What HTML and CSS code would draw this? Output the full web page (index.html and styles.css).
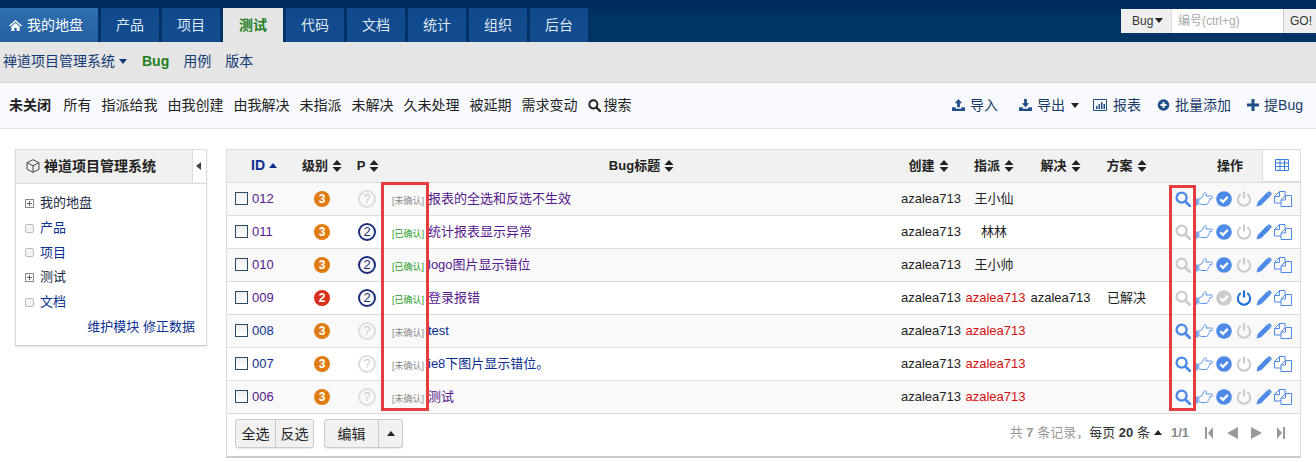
FILE: index.html
```html
<!DOCTYPE html>
<html lang="zh-CN">
<head>
  <meta charset="UTF-8">
  <title>禅道项目管理系统 - Bug</title>
  <link rel="stylesheet" href="styles.css">
</head>
<body>
  <svg class="sprite" xmlns="http://www.w3.org/2000/svg">
    <symbol id="i-search" viewBox="0 0 16 16"><circle cx="6.6" cy="6.6" r="5" fill="none" stroke="currentColor" stroke-width="2.4"/><path d="M10.4 10.4L15 15" stroke="currentColor" stroke-width="2.8" stroke-linecap="round"/></symbol>
    <symbol id="i-hand" viewBox="0 0 18 16"><path d="M0 7.5h3v7H0z" fill="currentColor" opacity=".75"/><path d="M3.800 8l3-1.200 2.400-4.400c.5-1.200 2.400-.9 2.200.8l-.5 1.800h5.300c1.700 0 1.700 2.600 0 2.600h-1.600c.6 1.200-.1 2-.8 2.300.2 1-.3 1.700-1 2 .1 1-.6 1.600-1.500 1.600H7c-1.300 0-2.200-.6-3.200-.8z" fill="#fff" stroke="currentColor" stroke-width=".9"/></symbol>
    <symbol id="i-check" viewBox="0 0 16 16"><circle cx="8" cy="8" r="7.800" fill="currentColor"/><path d="M4.300 8.200l2.700 2.700 4.800-5" fill="none" stroke="#fff" stroke-width="2.300"/></symbol>
    <symbol id="i-power" viewBox="0 0 16 16"><path d="M4.700 3.200a6.200 6.200 0 1 0 6.600 0" fill="none" stroke="currentColor" stroke-width="2"/><path d="M8 .5v7" stroke="currentColor" stroke-width="2.200"/></symbol>
    <symbol id="i-pencil" viewBox="0 0 16 16"><path d="M.5 15.500l1.200-4.600L11 1.600l3.400 3.400-9.300 9.300z" fill="currentColor"/><path d="M11.900.9c.8-.8 1.700-.8 2.400 0l.8.800c.7.700.7 1.600 0 2.400l-.7.700-3.200-3.200z" fill="currentColor"/></symbol>
    <symbol id="i-copy" viewBox="0 0 18 16"><path d="M5.500.5H11V4.500M5.500.5L.5 5.500V12H7M5.500.5V5.500H.5" fill="none" stroke="currentColor"/><path d="M11.500 4.500H17.500V15.500H7V9z" fill="#fff" stroke="currentColor"/><path d="M11.500 4.500V9H7" fill="none" stroke="currentColor"/></symbol>
    <symbol id="i-sort" viewBox="0 0 10 12"><path d="M5 0l4.500 5H.5zM5 12L.5 7h9z" fill="currentColor"/></symbol>
    <symbol id="i-home" viewBox="0 0 14 12"><path d="M7 0l7 6-1 1-6-5-6 5-1-1zM2.500 7L7 3.200 11.500 7v5H8.300V8.500H5.700V12H2.500z" fill="currentColor"/></symbol>
    <symbol id="i-upload" viewBox="0 0 14 13"><path d="M7 0l4 4.500H8.500V9h-3V4.500H3zM0 9h4v1.500h6V9h4v4H0z" fill="currentColor"/></symbol>
    <symbol id="i-download" viewBox="0 0 14 13"><path d="M5.500 0h3v4.500H11L7 9 3 4.500h2.500zM0 9h4v1.500h6V9h4v4H0z" fill="currentColor"/></symbol>
    <symbol id="i-report" viewBox="0 0 14 12"><path d="M.5.500h13v11H.5z" fill="none" stroke="currentColor"/><path d="M3 7h1.500v3H3zM5.500 5H7v5H5.500zM8 3h1.500v7H8zM10.500 5H12v5h-1.500z" fill="currentColor"/></symbol>
    <symbol id="i-plus-circle" viewBox="0 0 14 14"><circle cx="7" cy="7" r="6.800" fill="currentColor"/><path d="M3.500 7h7M7 3.500v7" stroke="#fff" stroke-width="2.200"/></symbol>
    <symbol id="i-plus" viewBox="0 0 12 12"><path d="M0 4.500h4.500V0h3v4.500H12v3H7.500V12h-3V7.500H0z" fill="currentColor"/></symbol>
    <symbol id="i-cube" viewBox="0 0 14 14"><path d="M7 .7l6 3v6.600l-6 3-6-3V3.700zM1 3.700l6 3 6-3M7 6.700v6.600" fill="none" stroke="currentColor"/></symbol>
    <symbol id="i-grid" viewBox="0 0 14 12"><path d="M.5.500h13v11H.5zM.5 4h13M.5 7.500h13M5 .5v11M9.500.5v11" fill="none" stroke="currentColor"/></symbol>
    <symbol id="i-first" viewBox="0 0 8 12"><path d="M0 0h2v12H0zM8 0v12L3 6z" fill="currentColor"/></symbol>
    <symbol id="i-prev" viewBox="0 0 11 12"><path d="M11 0v12L0 6z" fill="currentColor"/></symbol>
    <symbol id="i-next" viewBox="0 0 11 12"><path d="M0 0v12l11-6z" fill="currentColor"/></symbol>
    <symbol id="i-last" viewBox="0 0 8 12"><path d="M6 0h2v12H6zM0 0v12l5-6z" fill="currentColor"/></symbol>
  </svg>

  <header class="mainnav">
    <ul class="tabs">
      <li class="tab home"><svg class="ico-home"><use href="#i-home"/></svg>我的地盘</li>
      <li class="tab">产品</li>
      <li class="tab">项目</li>
      <li class="tab active">测试</li>
      <li class="tab">代码</li>
      <li class="tab">文档</li>
      <li class="tab">统计</li>
      <li class="tab">组织</li>
      <li class="tab">后台</li>
    </ul>
    <div class="searchbox">
      <span class="search-type">Bug<i class="caret"></i></span>
      <span class="search-input">编号(ctrl+g)</span>
      <span class="search-go">GO!</span>
    </div>
  </header>

  <nav class="subnav">
    <span class="sub-item project">禅道项目管理系统<i class="caret"></i></span>
    <span class="sub-item current">Bug</span>
    <span class="sub-item">用例</span>
    <span class="sub-item">版本</span>
  </nav>

  <div class="featurebar">
    <div class="filters">
      <a class="active">未关闭</a>
      <a>所有</a>
      <a>指派给我</a>
      <a>由我创建</a>
      <a>由我解决</a>
      <a>未指派</a>
      <a>未解决</a>
      <a>久未处理</a>
      <a>被延期</a>
      <a>需求变动</a>
      <a class="search-link"><svg class="ico-13"><use href="#i-search"/></svg>搜索</a>
    </div>
    <div class="feature-actions">
      <a><svg class="ico-fa"><use href="#i-upload"/></svg>导入</a>
      <a><svg class="ico-fa"><use href="#i-download"/></svg>导出<i class="caret"></i></a>
      <a class="act-report"><svg class="ico-fa"><use href="#i-report"/></svg>报表</a>
      <a><svg class="ico-fa"><use href="#i-plus-circle"/></svg>批量添加</a>
      <a class="act-add"><svg class="ico-fa"><use href="#i-plus"/></svg>提Bug</a>
    </div>
  </div>

  <main class="content">
    <aside class="side">
      <div class="side-head">
        <svg class="ico-cube"><use href="#i-cube"/></svg><strong>禅道项目管理系统</strong>
        <span class="side-toggle"><i class="caret-left"></i></span>
      </div>
      <ul class="tree">
        <li><i class="node plus"></i><span class="dark">我的地盘</span></li>
        <li><i class="node"></i>产品</li>
        <li><i class="node"></i>项目</li>
        <li><i class="node plus"></i><span class="dark">测试</span></li>
        <li><i class="node"></i>文档</li>
      </ul>
      <div class="side-links"><a>维护模块</a> <a>修正数据</a></div>
    </aside>

    <section class="panel">
      <table class="bugs">
        <colgroup>
          <col class="c-id"><col class="c-level"><col class="c-pri"><col class="c-title"><col class="c-user"><col class="c-assign"><col class="c-res"><col class="c-sol"><col class="c-ops">
        </colgroup>
        <thead>
          <tr>
            <th class="th-id">ID<i class="caret-up"></i></th>
            <th>级别<svg class="sort"><use href="#i-sort"/></svg></th>
            <th class="th-pri">P<svg class="sort"><use href="#i-sort"/></svg></th>
            <th class="th-title">Bug标题<svg class="sort"><use href="#i-sort"/></svg></th>
            <th class="th-user">创建<svg class="sort"><use href="#i-sort"/></svg></th>
            <th>指派<svg class="sort"><use href="#i-sort"/></svg></th>
            <th>解决<svg class="sort"><use href="#i-sort"/></svg></th>
            <th>方案<svg class="sort"><use href="#i-sort"/></svg></th>
            <th class="th-ops">操作</th>
          </tr>
        </thead>
        <tbody>
          <tr>
            <td class="td-id"><i class="check"></i><a class="seen">012</a></td>
            <td class="center"><span class="sev s3">3</span></td>
            <td class="center"><span class="pri none">?</span></td>
            <td><span class="tag">[未确认]</span><a class="seen">报表的全选和反选不生效</a></td>
            <td class="td-user">azalea713</td>
            <td class="center">王小仙</td>
            <td class="center"></td>
            <td class="center"></td>
            <td class="ops">
              <svg class="op on"><use href="#i-search"/></svg><svg class="op hand on"><use href="#i-hand"/></svg><svg class="op on"><use href="#i-check"/></svg><svg class="op off"><use href="#i-power"/></svg><svg class="op on"><use href="#i-pencil"/></svg><svg class="op copy on"><use href="#i-copy"/></svg>
            </td>
          </tr>
          <tr>
            <td class="td-id"><i class="check"></i><a class="seen">011</a></td>
            <td class="center"><span class="sev s3">3</span></td>
            <td class="center"><span class="pri p2">2</span></td>
            <td><span class="tag ok">[已确认]</span><a class="seen">统计报表显示异常</a></td>
            <td class="td-user">azalea713</td>
            <td class="center">林林</td>
            <td class="center"></td>
            <td class="center"></td>
            <td class="ops">
              <svg class="op off"><use href="#i-search"/></svg><svg class="op hand on"><use href="#i-hand"/></svg><svg class="op on"><use href="#i-check"/></svg><svg class="op off"><use href="#i-power"/></svg><svg class="op on"><use href="#i-pencil"/></svg><svg class="op copy on"><use href="#i-copy"/></svg>
            </td>
          </tr>
          <tr>
            <td class="td-id"><i class="check"></i><a class="seen">010</a></td>
            <td class="center"><span class="sev s3">3</span></td>
            <td class="center"><span class="pri p2">2</span></td>
            <td><span class="tag ok">[已确认]</span><a class="seen">logo图片显示错位</a></td>
            <td class="td-user">azalea713</td>
            <td class="center">王小帅</td>
            <td class="center"></td>
            <td class="center"></td>
            <td class="ops">
              <svg class="op off"><use href="#i-search"/></svg><svg class="op hand on"><use href="#i-hand"/></svg><svg class="op on"><use href="#i-check"/></svg><svg class="op off"><use href="#i-power"/></svg><svg class="op on"><use href="#i-pencil"/></svg><svg class="op copy on"><use href="#i-copy"/></svg>
            </td>
          </tr>
          <tr>
            <td class="td-id"><i class="check"></i><a class="seen">009</a></td>
            <td class="center"><span class="sev s2">2</span></td>
            <td class="center"><span class="pri p2">2</span></td>
            <td><span class="tag ok">[已确认]</span><a class="seen">登录报错</a></td>
            <td class="td-user">azalea713</td>
            <td class="center red">azalea713</td>
            <td class="center">azalea713</td>
            <td class="center">已解决</td>
            <td class="ops">
              <svg class="op off"><use href="#i-search"/></svg><svg class="op hand on"><use href="#i-hand"/></svg><svg class="op off"><use href="#i-check"/></svg><svg class="op on-dark"><use href="#i-power"/></svg><svg class="op on"><use href="#i-pencil"/></svg><svg class="op copy on"><use href="#i-copy"/></svg>
            </td>
          </tr>
          <tr>
            <td class="td-id"><i class="check"></i><a>008</a></td>
            <td class="center"><span class="sev s3">3</span></td>
            <td class="center"><span class="pri none">?</span></td>
            <td><span class="tag">[未确认]</span><a>test</a></td>
            <td class="td-user">azalea713</td>
            <td class="center red">azalea713</td>
            <td class="center"></td>
            <td class="center"></td>
            <td class="ops">
              <svg class="op on"><use href="#i-search"/></svg><svg class="op hand on"><use href="#i-hand"/></svg><svg class="op on"><use href="#i-check"/></svg><svg class="op off"><use href="#i-power"/></svg><svg class="op on"><use href="#i-pencil"/></svg><svg class="op copy on"><use href="#i-copy"/></svg>
            </td>
          </tr>
          <tr>
            <td class="td-id"><i class="check"></i><a>007</a></td>
            <td class="center"><span class="sev s3">3</span></td>
            <td class="center"><span class="pri none">?</span></td>
            <td><span class="tag">[未确认]</span><a>ie8下图片显示错位。</a></td>
            <td class="td-user">azalea713</td>
            <td class="center red">azalea713</td>
            <td class="center"></td>
            <td class="center"></td>
            <td class="ops">
              <svg class="op on"><use href="#i-search"/></svg><svg class="op hand on"><use href="#i-hand"/></svg><svg class="op on"><use href="#i-check"/></svg><svg class="op off"><use href="#i-power"/></svg><svg class="op on"><use href="#i-pencil"/></svg><svg class="op copy on"><use href="#i-copy"/></svg>
            </td>
          </tr>
          <tr>
            <td class="td-id"><i class="check"></i><a class="seen">006</a></td>
            <td class="center"><span class="sev s3">3</span></td>
            <td class="center"><span class="pri none">?</span></td>
            <td><span class="tag">[未确认]</span><a class="seen">测试</a></td>
            <td class="td-user">azalea713</td>
            <td class="center red">azalea713</td>
            <td class="center"></td>
            <td class="center"></td>
            <td class="ops">
              <svg class="op on"><use href="#i-search"/></svg><svg class="op hand on"><use href="#i-hand"/></svg><svg class="op on"><use href="#i-check"/></svg><svg class="op off"><use href="#i-power"/></svg><svg class="op on"><use href="#i-pencil"/></svg><svg class="op copy on"><use href="#i-copy"/></svg>
            </td>
          </tr>
        </tbody>
      </table>
      <span class="col-setting"><svg class="ico-grid"><use href="#i-grid"/></svg></span>
      <div class="table-foot">
        <div class="btn-group"><button>全选</button><button>反选</button></div>
        <div class="btn-group edit"><button class="btn-edit">编辑</button><button class="btn-more"><i class="caret-up dark"></i></button></div>
        <div class="pager">
          <span>共 <b>7</b> 条记录，<span class="dark">每页 <b>20</b> 条</span><i class="caret-up dark"></i></span>
          <b class="page-num">1/1</b>
          <svg class="pg first"><use href="#i-first"/></svg>
          <svg class="pg prev"><use href="#i-prev"/></svg>
          <svg class="pg next"><use href="#i-next"/></svg>
          <svg class="pg last"><use href="#i-last"/></svg>
        </div>
      </div>
    </section>

    <div class="mark mark-tag"></div>
    <div class="mark mark-op"></div>
  </main>
</body>
</html>
```

FILE: styles.css
```css
* { box-sizing: border-box; }
html, body { height: 100%; }
body { margin: 0; background: #fff; color: #222; font: 13px/1.4 "Liberation Sans", "Noto Sans CJK SC", sans-serif; overflow: hidden; }
ul { list-style: none; margin: 0; padding: 0; }
a { color: #0c2f8f; text-decoration: none; }
.sprite { display: none; }

.caret { display: inline-block; width: 0; height: 0; margin-left: 6px; border: 4px solid transparent; border-top: 5px solid currentColor; border-bottom: 0; vertical-align: 2px; }
.caret-up { display: inline-block; width: 0; height: 0; margin-left: 4px; border: 4px solid transparent; border-bottom: 5px solid #0c2f8f; border-top: 0; vertical-align: 2px; }
.caret-up.dark { border-bottom-color: #222; }

/* top nav */
.mainnav { height: 42px; display: flex; justify-content: space-between; background: linear-gradient(#00295a, #003366 40%); }
.tabs { display: flex; gap: 3px; padding-top: 8px; }
.tab { width: 58px; height: 34px; line-height: 34px; text-align: center; font-size: 14px; color: #dfe8f3; background: linear-gradient(#114a8c, #134c8f); }
.tab.home { width: 98px; padding-right: 6px; background: linear-gradient(#2f70b0, #255f9f); color: #fff; }
.tab.active { width: 60px; background: #e5e5e5; color: #1f7f1f; font-weight: bold; }
.ico-home { width: 13px; height: 11px; margin-right: 5px; vertical-align: -1px; color: #fff; }
.searchbox { display: flex; width: 195px; height: 24px; margin-top: 9px; line-height: 24px; font-size: 12px; color: #333; }
.search-type { width: 50px; padding-left: 11px; background: #efefef; }
.search-type .caret { margin-left: 2px; border-top-color: #222; }
.search-input { width: 112px; padding-left: 6px; background: #fff; color: #aaa; border-left: 1px solid #ddd; }
.search-go { width: 33px; padding-left: 6px; background: #efefef; border-left: 1px solid #ccc; }

/* second nav */
.subnav { height: 41px; display: flex; align-items: center; padding: 0 0 0 3px; background: #e5e5e5; border-bottom: 1px solid #d5d5d5; font-size: 14px; color: #123a73; }
.sub-item { margin-right: 14px; }
.sub-item.project { margin-right: 15px; }
.sub-item.project .caret { margin-left: 4px; border-top-color: #123a73; }
.sub-item.current { color: #1f7f1f; font-weight: bold; }

/* filter bar */
.featurebar { height: 46px; display: flex; justify-content: space-between; align-items: center; padding: 0 13px 0 9px; background: #f8fafe; border-bottom: 1px solid #e2e2e2; font-size: 14px; }
.filters { display: flex; gap: 10px; }
.filters a { color: #222; }
.filters a.active { margin-right: 2.500px; font-weight: bold; }
.ico-13 { width: 13px; height: 13px; margin-right: 3px; vertical-align: -2px; color: #222; }
.feature-actions { display: flex; gap: 16px; }
.feature-actions a { color: #1b3a66; }
.feature-actions .caret { border-top-color: #222; }
.feature-actions a:first-child { margin-right: 5px; }
.feature-actions .act-report { margin-left: -2px; }
.ico-fa { width: 13px; height: 12px; margin-right: 5px; vertical-align: -1px; color: #1f4f85; }
.act-report .ico-fa { width: 14px; margin-right: 6px; }
.act-add .ico-fa { width: 12px; }

/* content */
.content { position: relative; display: flex; align-items: flex-start; gap: 19px; padding: 20px 0 0 15px; }
.side { width: 192px; height: 197px; border: 1px solid #ddd; border-bottom-color: #ccc; box-shadow: 0 1px 2px rgba(0,0,0,.1); }
.side-head { position: relative; height: 34px; line-height: 33px; padding-left: 10px; background: #f1f1f1; border-bottom: 1px solid #ddd; font-size: 14px; color: #222; }
.ico-cube { width: 14px; height: 14px; margin-right: 4px; vertical-align: -2px; color: #444; }
.side-toggle { position: absolute; top: 0; right: 0; width: 14px; height: 32px; background: #fff; border-left: 1px solid #ddd; }
.caret-left { position: absolute; top: 12px; left: 3px; width: 0; height: 0; border: 4px solid transparent; border-right: 5px solid #444; border-left: 0; }
.tree { padding: 7px 0 0 9px; font-size: 13px; color: #0c2f8f; }
.tree li { height: 24.700px; line-height: 24px; display: flex; align-items: center; }
.tree .dark { color: #1b2a44; }
.node { position: relative; width: 9px; height: 9px; margin-right: 6px; background: #f4f4f4; border: 1px solid #bbb; border-radius: 2px; }
.node.plus { background: #fff; border-radius: 0; border-color: #888; }
.node.plus::before { content: ""; position: absolute; left: 1px; top: 3px; width: 5px; height: 1px; background: #666; }
.node.plus::after { content: ""; position: absolute; left: 3px; top: 1px; width: 1px; height: 5px; background: #666; }
.side-links { padding: 4px 11px 0 0; text-align: right; font-size: 13px; }

/* bug table */
.panel { position: relative; width: 1075px; height: 309px; border: 1px solid #ddd; border-bottom: 2px solid #ccc; }
.bugs { width: 100%; table-layout: fixed; border-collapse: collapse; }
.c-id { width: 65px; } .c-level { width: 60px; } .c-pri { width: 30px; } .c-title { width: 511px; }
.c-user { width: 65px; } .c-assign { width: 72px; } .c-res { width: 61px; } .c-sol { width: 71px; } .c-ops { width: 138px; }
.bugs th { height: 32px; padding: 0; background: #f1f1f1; border-bottom: 1px solid #ddd; font-size: 13px; font-weight: bold; text-align: center; color: #222; white-space: nowrap; }
.bugs th.th-id { text-align: left; padding-left: 24px; color: #0c2f8f; font-size: 14px; font-weight: bold; }
.bugs th.th-pri { padding-left: 2px; }
.bugs th.th-title { padding-left: 8px; }
.bugs th.th-user { padding-left: 6px; }
.bugs th.th-ops { padding-right: 2px; }
.sort { width: 10px; height: 12px; margin-left: 4px; vertical-align: -2px; color: #222; }
.bugs td { height: 33px; padding: 2px 0 0; border-bottom: 1px solid #ddd; font-size: 13px; white-space: nowrap; color: #222; }
.bugs tbody tr:nth-child(odd) td { background: #f9f9f9; }
.bugs a { font-size: 13px; }
.bugs a.seen { color: #551a8b; }
.center { text-align: center; }
.bugs td.red { padding-left: 3px; color: #d10f0f; }
.bugs td.td-id, .bugs td.td-user { padding-left: 8px; }
.check { display: inline-block; width: 13px; height: 13px; margin-right: 4px; vertical-align: -2px; background: linear-gradient(#eee, #fff); border: 1px solid #2a4a66; }
.sev { display: inline-block; width: 16px; height: 16px; line-height: 16px; border-radius: 50%; font-size: 12px; font-weight: bold; color: #fff; text-align: center; }
.s3 { background: #e07b12; }
.s2 { background: #d8301a; }
.pri { display: inline-block; width: 18px; height: 18px; line-height: 14px; border: 2px solid #1d2f7a; border-radius: 50%; font-size: 13px; color: #1d2f7a; text-align: center; }
.pri.none { border-color: #ddd; color: #ccc; }
.tag { display: inline-block; width: 36px; margin-left: 10px; font-size: 9px; color: #888; vertical-align: -1px; }
.tag.ok { color: #1e9a1e; }
.bugs td.ops { padding: 0 0 0 13px; font-size: 0; }
.op { width: 16px; height: 16px; margin-right: 4px; vertical-align: middle; }
.op.hand { width: 18px; margin-right: 3px; }
.op.copy { width: 18px; margin-right: 0; margin-left: -2px; }
.on { color: #4d8ae8; }
.off { color: #ccc; }
.on-dark { color: #1f6fd6; }
.col-setting { position: absolute; top: 0; right: 0; width: 38px; height: 32px; background: #fff; border-left: 1px solid #ddd; border-bottom: 1px solid #ddd; text-align: center; line-height: 32px; }
.ico-grid { width: 14px; height: 12px; vertical-align: -1px; color: #3f7fd8; }

.table-foot { display: flex; align-items: center; height: 43px; padding: 0 15px 4px 8px; }
.btn-group { display: flex; height: 29px; border: 1px solid #ccc; border-radius: 3px; background: #f1f1f1; box-shadow: 0 1px 1px rgba(0,0,0,.08); }
.btn-group button { height: 27px; padding: 0; border: 0; background: transparent; font: 14px "Liberation Sans", "Noto Sans CJK SC", sans-serif; color: #222; width: 39px; }
.btn-group button + button { width: 38px; border-left: 1px solid #ccc; }
.btn-group.edit { margin-left: 10px; }
.btn-group .btn-edit { width: 53px; }
.btn-group .btn-more { width: 24px; }
.btn-more .caret-up { margin: 0; }
.pager { display: flex; align-items: center; margin-left: auto; font-size: 13px; color: #999; }
.pager .dark { color: #333; }
.pager b { font-weight: bold; }
.page-num { margin: 0 16px 0 9px; color: #888; font-size: 13px; }
.pg { height: 12px; color: #999; }
.pg.first, .pg.last { width: 8px; }
.pg.prev { width: 11px; margin: 0 13px 0 14px; }
.pg.next { width: 11px; margin-right: 15px; }

/* red call-out boxes drawn on the screenshot */
.mark { position: absolute; border: 3px solid #e53c3f; pointer-events: none; }
.mark-tag { left: 381px; top: 53px; width: 48px; height: 229px; }
.mark-op { left: 1169px; top: 56px; width: 27px; height: 226px; }
```
